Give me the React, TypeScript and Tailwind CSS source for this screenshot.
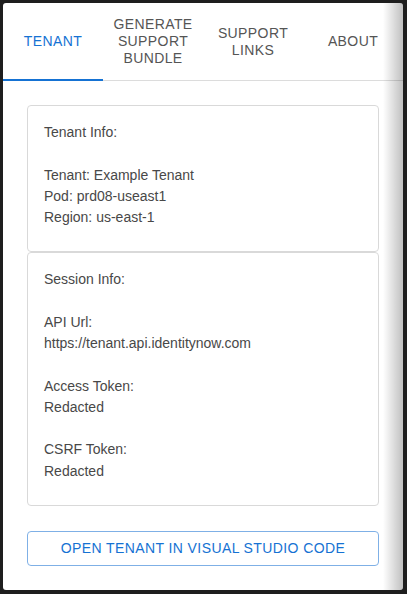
const tabs = [
	{ label: "Tenant", active: true },
	{ label: "Generate Support Bundle", active: false },
	{ label: "Support Links", active: false },
	{ label: "About", active: false },
];

const InfoCard = ({ lines }: { lines: string[] }) => (
	<div className="border border-[#d9d9d9] rounded-[4px] px-4 pt-[16px] pb-[23px] text-[14px] leading-[21.25px] text-[#484848]">
		{lines.map((line, index) => (
			<div key={index} className="h-[21.25px] whitespace-nowrap">
				{line}
			</div>
		))}
	</div>
);

const App = () => {
	return (
		<div
			className="w-[407px] h-[594px] bg-[#1e1e1e] p-[3px] pr-[4px] pb-[4px]"
			style={{ fontFamily: '"Liberation Sans", Arial, sans-serif' }}
		>
			<div className="relative w-[400px] h-[587px] bg-white rounded-[3px] overflow-hidden flex flex-col">
				<div className="flex border-b border-[#dcdcdc]">
					{tabs.map(tab => (
						<div
							key={tab.label}
							className={`relative w-[100px] h-[77px] flex items-center justify-center text-center uppercase text-[14px] leading-[17px] tracking-[0.4px] px-2 ${
								tab.active ? "text-[#1572d3]" : "text-[#555555]"
							}`}
						>
							{tab.label}
							{tab.active && (
								<span className="absolute left-0 right-0 bottom-[-1px] h-[2px] bg-[#1572d3]" />
							)}
						</div>
					))}
				</div>

				<div className="flex flex-col p-6">
					<InfoCard
						lines={[
							"Tenant Info:",
							"",
							"Tenant: Example Tenant",
							"Pod: prd08-useast1",
							"Region: us-east-1",
						]}
					/>
					<InfoCard
						lines={[
							"Session Info:",
							"",
							"API Url:",
							"https://tenant.api.identitynow.com",
							"",
							"Access Token:",
							"Redacted",
							"",
							"CSRF Token:",
							"Redacted",
						]}
					/>
					<button className="mt-[25px] h-[35px] w-full border border-[#7fb0e6] rounded-[4px] text-[#1572d3] uppercase text-[14px] tracking-[0.4px]">
						Open Tenant in Visual Studio Code
					</button>
				</div>

				<div className="pointer-events-none absolute top-0 bottom-0 right-0 w-[20px] bg-gradient-to-r from-transparent to-black/25" />
			</div>
		</div>
	);
};

export default App;
